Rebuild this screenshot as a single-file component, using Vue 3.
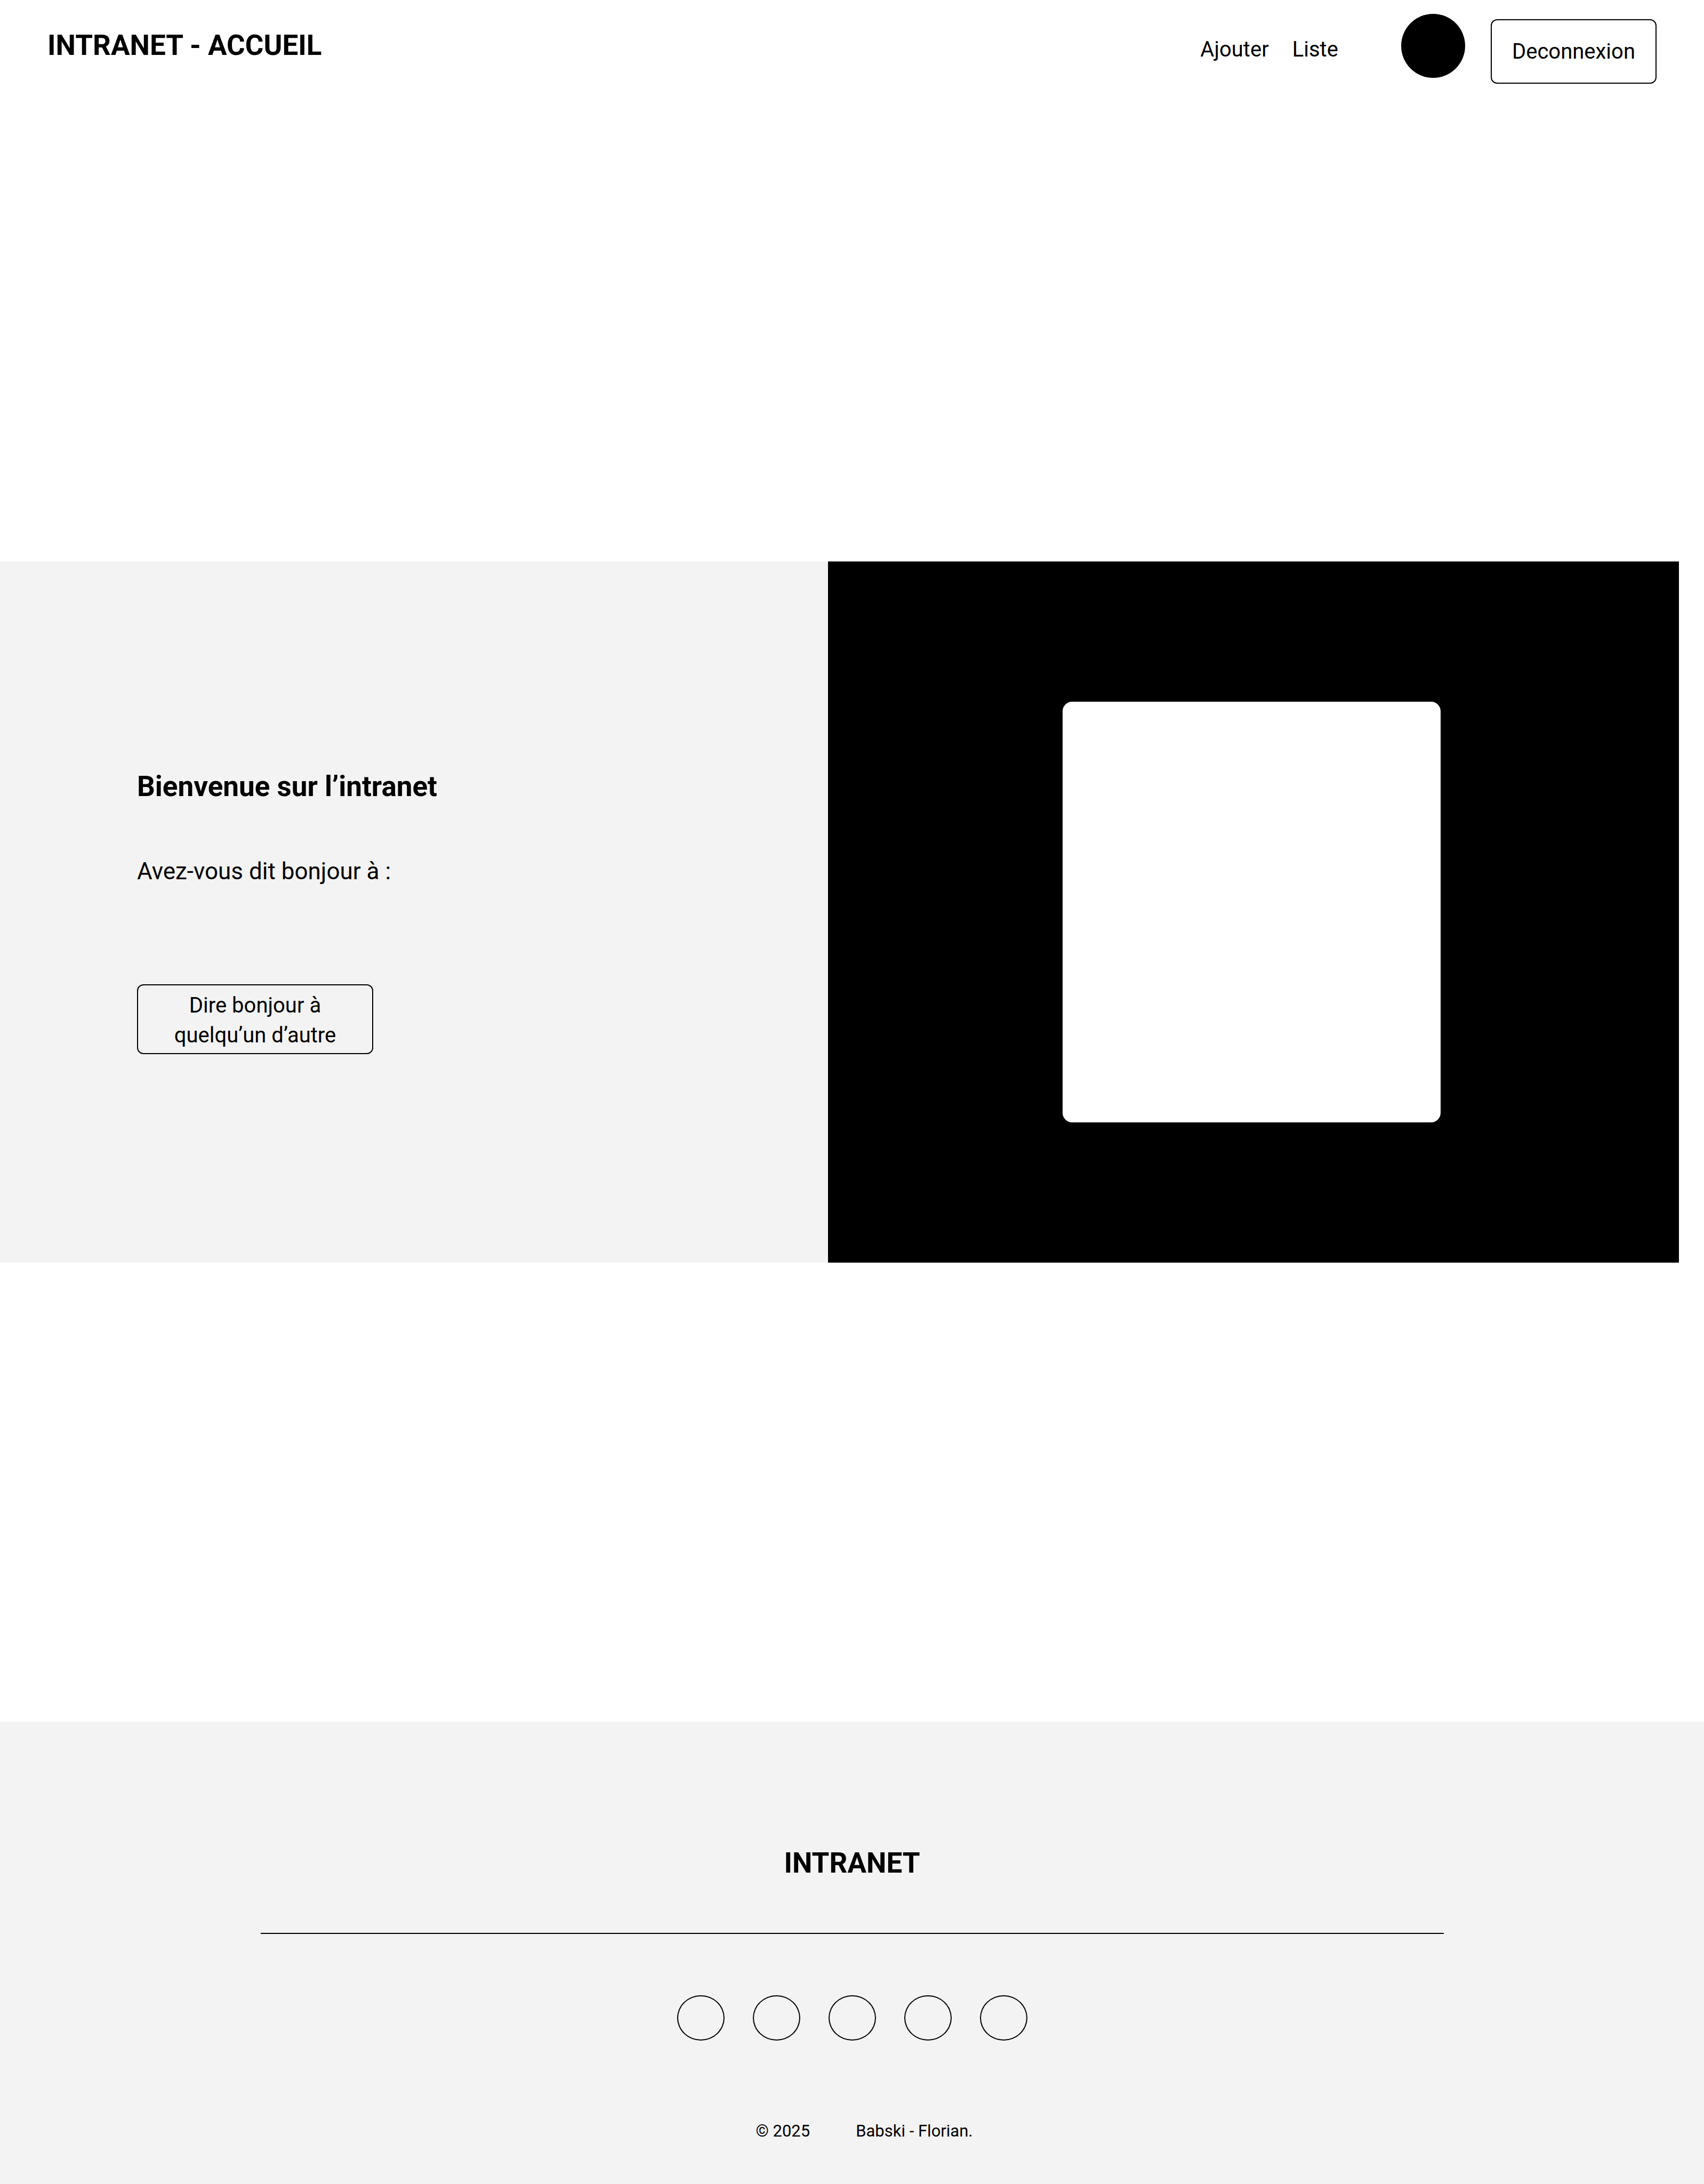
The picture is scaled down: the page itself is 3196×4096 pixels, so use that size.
<script setup>
const links = [
  { label: 'Ajouter', href: '#ajouter' },
  { label: 'Liste', href: '#liste' },
]
const socials = [1, 2, 3, 4, 5]
</script>

<template>
  <div class="page">
    <header class="header">
      <h1 class="brand">INTRANET - ACCUEIL</h1>
      <nav class="nav">
        <a v-for="link in links" :key="link.label" :href="link.href">{{ link.label }}</a>
      </nav>
      <span class="avatar"></span>
      <button type="button" class="btn logout">Deconnexion</button>
    </header>

    <main class="main">
      <section class="hero">
        <div class="welcome">
          <h2 class="heading">Bienvenue sur l’intranet</h2>
          <p class="lead">Avez-vous dit bonjour à :</p>
          <button type="button" class="btn greet">Dire bonjour à quelqu’un d’autre</button>
        </div>
        <div class="stage">
          <div class="card"></div>
        </div>
      </section>
    </main>

    <footer class="footer">
      <h2 class="heading">INTRANET</h2>
      <hr class="rule" />
      <ul class="socials">
        <li v-for="n in socials" :key="n"></li>
      </ul>
      <p class="legal"><span>© 2025</span><span>Babski - Florian.</span></p>
    </footer>
  </div>
</template>

<style>
body {
  margin: 0;
  background: #fff;
}
</style>

<style scoped>
.page {
  display: flex;
  flex-direction: column;
  min-height: 100vh;
  font-family: Roboto, "Liberation Sans", sans-serif;
  font-size: 40px;
  line-height: 56px;
  color: #000;
}

h1,
h2,
p,
ul,
hr {
  margin: 0;
  padding: 0;
}

.header {
  display: flex;
  align-items: flex-start;
  padding: 26px 89px;
}

.brand,
.heading {
  font-size: 53px;
  line-height: 64px;
  font-weight: 700;
}

.brand {
  margin-right: auto;
  padding-top: 27px;
}

.nav {
  display: flex;
  gap: 44px;
  padding-top: 39px;
}

.nav a {
  color: inherit;
  text-decoration: none;
}

.avatar {
  width: 120px;
  height: 120px;
  margin-left: 118px;
  border-radius: 50%;
  background: #000;
}

.btn {
  box-sizing: border-box;
  border: 2px solid #000;
  border-radius: 12px;
  background: transparent;
  font: inherit;
  color: inherit;
  cursor: pointer;
}

.logout {
  height: 121px;
  margin: 10px 0 0 48px;
  padding: 0 38px;
}

.main {
  flex: 1;
  display: flex;
  align-items: center;
  padding: 8px 47px 0 0;
}

.hero {
  flex: 1;
  display: grid;
  grid-template-columns: 1553fr 1596fr;
  min-height: 1315px;
}

.welcome {
  display: flex;
  flex-direction: column;
  align-items: flex-start;
  justify-content: center;
  padding-left: 257px;
  background: #f3f3f3;
}

.lead {
  margin-top: 99px;
  font-size: 44px;
}

.greet {
  width: 443px;
  height: 131px;
  margin-top: 184px;
  padding: 4px 56px 0;
}

.stage {
  display: flex;
  align-items: center;
  justify-content: center;
  padding-right: 8px;
  background: #000;
}

.card {
  width: 709px;
  height: 60%;
  border-radius: 18px;
  background: #fff;
}

.footer {
  display: flex;
  flex-direction: column;
  align-items: center;
  padding: 233px 0 79px;
  background: #f3f3f3;
}

.rule {
  width: calc(100% - 977px);
  height: 2px;
  margin-top: 99px;
  border: 0;
  background: #000;
}

.socials {
  display: flex;
  gap: 53px;
  margin-top: 115px;
  list-style: none;
}

.socials li {
  box-sizing: border-box;
  width: 89px;
  height: 85px;
  border: 2px solid #000;
  border-radius: 50%;
}

.legal {
  display: flex;
  gap: 86px;
  margin-top: 150px;
  padding-left: 46px;
  font-size: 31px;
  line-height: 40px;
}
</style>
